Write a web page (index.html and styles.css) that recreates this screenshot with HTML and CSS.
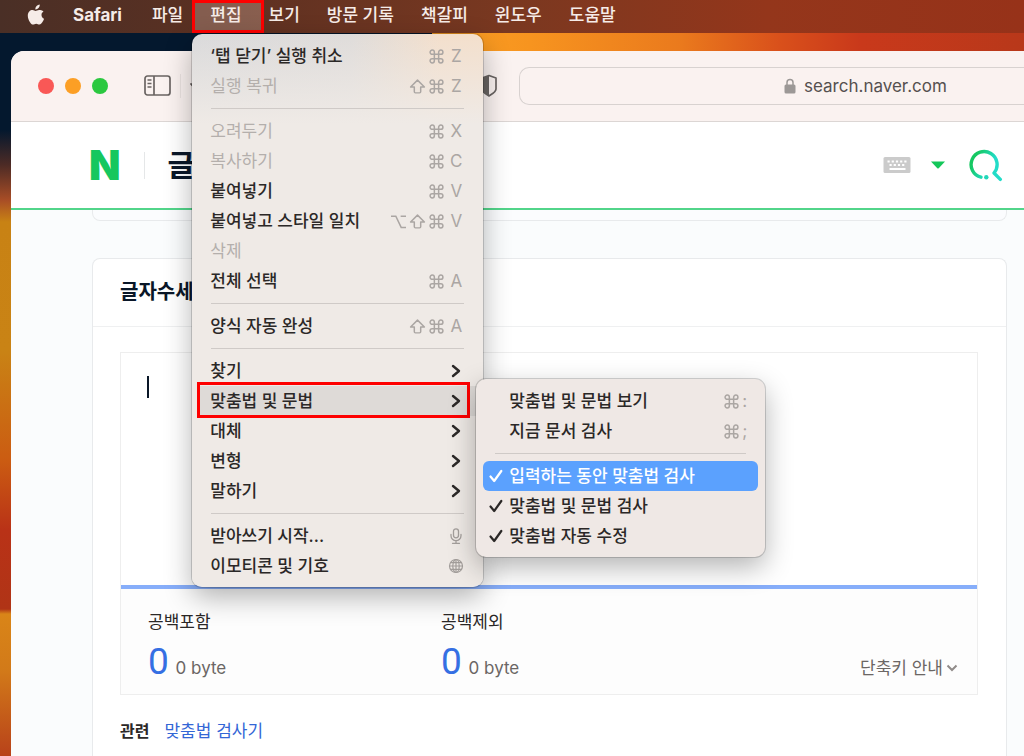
FILE: index.html
```html
<!DOCTYPE html>
<html lang="ko">
<head>
<meta charset="utf-8">
<title>글자수세기</title>
<link rel="stylesheet" href="styles.css">
</head>
<body class="desktop">
<svg class="defs" aria-hidden="true">
  <symbol id="chevron" viewBox="0 0 10 14"><path d="M2 2l6 5-6 5" fill="none" stroke="currentColor" stroke-width="2.4" stroke-linecap="round" stroke-linejoin="round"/></symbol>
  <symbol id="check" viewBox="0 0 14 14"><path d="M1.500 7.500l3.700 4.500L12.300 2" fill="none" stroke="currentColor" stroke-width="2.200" stroke-linecap="round" stroke-linejoin="round"/></symbol>
  <symbol id="cmd" viewBox="0 0 14 14"><path d="M5 5h4v4H5zM5 5H3a2 2 0 1 1 2-2zM9 5V3a2 2 0 1 1 2 2zM9 9h2a2 2 0 1 1-2 2zM5 9v2a2 2 0 1 1-2-2z" fill="none" stroke="currentColor" stroke-width="1.400"/></symbol>
  <symbol id="shift" viewBox="0 0 16 14"><path d="M8 1L1.500 7.500H5V12q0 1 1 1h4q1 0 1-1V7.500h3.500z" fill="none" stroke="currentColor" stroke-width="1.400" stroke-linejoin="round"/></symbol>
  <symbol id="option" viewBox="0 0 14 14"><path d="M0 2h4.500l5 10.500H14M9 2h5" fill="none" stroke="currentColor" stroke-width="1.400"/></symbol>
</svg>

<header class="menubar">
  <button class="apple" aria-label="Apple">
    <svg width="20" height="22" viewBox="0 0 20 22"><path fill="currentColor" d="M13.700 0.500c.2 1.400-.4 2.700-1.200 3.600-.8.900-2 1.500-3.100 1.400-.2-1.300.4-2.600 1.200-3.400.8-.9 2.100-1.500 3.100-1.600zM17.500 7.600c-1.300.8-2 1.900-2 3.400 0 1.800 1 3.100 2.600 3.800-.4 1.200-1 2.400-1.800 3.500-.8 1.100-1.600 2.300-2.900 2.300s-1.700-.8-3.200-.8-2 .8-3.200.8-2.100-1.100-3-2.400C2.700 16.300 1.800 13.900 1.800 11.700c0-3.700 2.400-5.600 4.700-5.600 1.300 0 2.300.8 3.100.8.800 0 2-.9 3.500-.9 1.300 0 3.300.4 4.400 1.600z"/></svg>
  </button>
  <button class="bar-item app-name">Safari</button>
  <button class="bar-item">파일</button>
  <div class="open-item">
    <button class="bar-item" aria-haspopup="menu" aria-expanded="true">편집</button>
    <ul class="menu edit-menu" role="menu">
      <li><button class="row" role="menuitem">‘탭 닫기’ 실행 취소<span class="keys"><svg class="key"><use href="#cmd"/></svg><kbd>Z</kbd></span></button></li>
      <li><button class="row" role="menuitem" disabled>실행 복귀<span class="keys"><svg class="key"><use href="#shift"/></svg><svg class="key"><use href="#cmd"/></svg><kbd>Z</kbd></span></button></li>
      <li class="rule" role="separator"></li>
      <li><button class="row" role="menuitem" disabled>오려두기<span class="keys"><svg class="key"><use href="#cmd"/></svg><kbd>X</kbd></span></button></li>
      <li><button class="row" role="menuitem" disabled>복사하기<span class="keys"><svg class="key"><use href="#cmd"/></svg><kbd>C</kbd></span></button></li>
      <li><button class="row" role="menuitem">붙여넣기<span class="keys"><svg class="key"><use href="#cmd"/></svg><kbd>V</kbd></span></button></li>
      <li><button class="row" role="menuitem">붙여넣고 스타일 일치<span class="keys"><svg class="key"><use href="#option"/></svg><svg class="key"><use href="#shift"/></svg><svg class="key"><use href="#cmd"/></svg><kbd>V</kbd></span></button></li>
      <li><button class="row" role="menuitem" disabled>삭제</button></li>
      <li><button class="row" role="menuitem">전체 선택<span class="keys"><svg class="key"><use href="#cmd"/></svg><kbd>A</kbd></span></button></li>
      <li class="rule" role="separator"></li>
      <li><button class="row" role="menuitem">양식 자동 완성<span class="keys"><svg class="key"><use href="#shift"/></svg><svg class="key"><use href="#cmd"/></svg><kbd>A</kbd></span></button></li>
      <li class="rule" role="separator"></li>
      <li><button class="row" role="menuitem">찾기<svg class="arrow"><use href="#chevron"/></svg></button></li>
      <li class="current">
        <button class="row" role="menuitem" aria-haspopup="menu" aria-expanded="true">맞춤법 및 문법<svg class="arrow"><use href="#chevron"/></svg></button>
        <ul class="menu sub-menu" role="menu">
          <li><button class="row" role="menuitem">맞춤법 및 문법 보기<span class="keys"><svg class="key"><use href="#cmd"/></svg><kbd class="narrow">:</kbd></span></button></li>
          <li><button class="row" role="menuitem">지금 문서 검사<span class="keys"><svg class="key"><use href="#cmd"/></svg><kbd class="narrow">;</kbd></span></button></li>
          <li class="rule" role="separator"></li>
          <li><button class="row selected" role="menuitemcheckbox" aria-checked="true"><svg class="tick"><use href="#check"/></svg>입력하는 동안 맞춤법 검사</button></li>
          <li><button class="row" role="menuitemcheckbox" aria-checked="true"><svg class="tick"><use href="#check"/></svg>맞춤법 및 문법 검사</button></li>
          <li><button class="row" role="menuitemcheckbox" aria-checked="true"><svg class="tick"><use href="#check"/></svg>맞춤법 자동 수정</button></li>
        </ul>
      </li>
      <li><button class="row" role="menuitem">대체<svg class="arrow"><use href="#chevron"/></svg></button></li>
      <li><button class="row" role="menuitem">변형<svg class="arrow"><use href="#chevron"/></svg></button></li>
      <li><button class="row" role="menuitem">말하기<svg class="arrow"><use href="#chevron"/></svg></button></li>
      <li class="rule" role="separator"></li>
      <li><button class="row" role="menuitem">받아쓰기 시작...<svg class="glyph" viewBox="0 0 16 16"><g fill="none" stroke="currentColor" stroke-width="1.300" stroke-linecap="round"><rect x="5.500" y="0.800" width="5" height="9" rx="2.500"/><path d="M3 6.500v1.200a5 5 0 0 0 10 0V6.500M8 12.700v2.500M4.500 15.300h7"/></g></svg></button></li>
      <li><button class="row" role="menuitem">이모티콘 및 기호<svg class="glyph" viewBox="0 0 16 16"><g fill="none" stroke="currentColor" stroke-width="1.200"><circle cx="8" cy="8" r="6.500"/><ellipse cx="8" cy="8" rx="3.200" ry="6.500"/><path d="M8 1.500v13M1.500 8h13M2.500 4.700h11M2.500 11.300h11"/></g></svg></button></li>
    </ul>
  </div>
  <button class="bar-item">보기</button>
  <button class="bar-item">방문 기록</button>
  <button class="bar-item">책갈피</button>
  <button class="bar-item">윈도우</button>
  <button class="bar-item">도움말</button>
</header>

<main class="window">
  <div class="toolbar">
    <div class="lights"><button class="light close" aria-label="닫기"></button><button class="light minimize" aria-label="최소화"></button><button class="light expand" aria-label="확대"></button></div>
    <div class="tools">
      <button class="tool" aria-label="사이드바"><svg width="28" height="22" viewBox="0 0 28 22"><g fill="none" stroke="currentColor" stroke-width="1.700"><rect x="1" y="1" width="25" height="19" rx="2.500"/><path d="M10 1v19"/><path d="M3.500 5h4M3.500 8.500h4M3.500 12h4" stroke-width="1.300"/></g></svg></button>
      <span class="tool-rule"></span>
      <button class="tool" aria-label="탭 그룹"><svg width="12" height="8" viewBox="0 0 12 8"><path d="M2 2l4 4 4-4" fill="none" stroke="currentColor" stroke-width="1.800" stroke-linecap="round"/></svg></button>
    </div>
    <button class="tool shield" aria-label="개인 정보 보호"><svg width="18" height="24" viewBox="0 0 18 24"><path d="M9 1.500l7 2.500v11c0 3-4 5-7 7-3-2-7-4-7-7V4z" fill="none" stroke="currentColor" stroke-width="1.700" stroke-linejoin="round"/><path d="M9 1.500V22c-3-2-7-4-7-7V4z" fill="currentColor"/></svg></button>
    <label class="address">
      <svg width="12" height="16" viewBox="0 0 12 16"><path d="M3 7V4.500a3 3 0 0 1 6 0V7" fill="none" stroke="#9c9896" stroke-width="1.500"/><rect x="0.500" y="6.500" width="11" height="9" rx="1.500" fill="#9c9896"/></svg>
      <input type="text" value="search.naver.com" aria-label="주소">
    </label>
  </div>

  <div class="search-head">
    <a class="logo" href="#" aria-label="네이버">N</a>
    <span class="logo-rule"></span>
    <span class="query">글</span>
    <button class="tool keyboard" aria-label="키보드"><svg width="28" height="18" viewBox="0 0 28 18"><rect x="0.500" y="1" width="27" height="16" rx="1.500" fill="#cbcbcb"/><path d="M4.500 5.500H25M6.500 9h16" stroke="#fff" stroke-width="2.200" stroke-dasharray="2.200 2"/><path d="M6.500 13h16" stroke="#fff" stroke-width="2"/></svg></button>
    <button class="tool" aria-label="자동완성"><svg width="14" height="8" viewBox="0 0 14 8"><path d="M0 0.500h14L7.700 7.300q-.7.600-1.400 0z" fill="#14c75a"/></svg></button>
    <button class="tool find" aria-label="검색"><svg width="34" height="34" viewBox="0 0 34 34"><defs><linearGradient id="sweep" gradientUnits="userSpaceOnUse" x1="4" y1="4" x2="24" y2="14"><stop offset="0.200" stop-color="#16c862"/><stop offset="1" stop-color="#22dcc8"/></linearGradient></defs><path d="M12 29.200A13 13 0 1 1 25 25L31.300 31.400" fill="none" stroke="url(#sweep)" stroke-width="3.400" stroke-linecap="round" stroke-linejoin="round"/><circle cx="17.300" cy="29.200" r="2.200" fill="#22d8ba"/></svg></button>
  </div>

  <div class="content">
    <div class="card previous"></div>
    <section class="card counter">
      <h2 class="card-title">글자수세기</h2>
      <div class="card-body">
        <div class="panel">
          <div class="editor"><textarea class="entry" aria-label="글자수를 셀 내용"></textarea></div>
          <div class="totals">
            <div class="total"><span class="total-name">공백포함</span><span class="amount"><strong>0</strong> 0 byte</span></div>
            <div class="total"><span class="total-name">공백제외</span><span class="amount"><strong>0</strong> 0 byte</span></div>
            <button class="help">단축키 안내<svg width="12" height="8" viewBox="0 0 12 8"><path d="M1.500 1.500L6 6l4.500-4.500" fill="none" stroke="#908b89" stroke-width="2"/></svg></button>
          </div>
        </div>
        <p class="related"><b>관련</b><a href="#">맞춤법 검사기</a></p>
      </div>
    </section>
  </div>
</main>
</body>
</html>
```
FILE: styles.css
```css
* { box-sizing: border-box; }

button, input, textarea {
  margin: 0;
  padding: 0;
  border: 0;
  background: none;
  color: inherit;
  font: inherit;
}

.defs { position: absolute; width: 0; height: 0; }

.desktop {
  display: flex;
  flex-direction: column;
  height: 100vh;
  margin: 0;
  overflow: hidden;
  font: 17px/24px Inter, "Noto Sans CJK KR", sans-serif;
  color: #2b2827;
  background:
    linear-gradient(90deg, #04182e 432px, #fba024 432px, #f7941f 530px, #ea7a1d 680px, #d9501b 780px, #c9391b 860px, #b8381a) 0 0 / 100% 80px no-repeat,
    linear-gradient(#04182e 130px, #4d2b25 165px, #a84d26 200px, #c88214 222px, #c98315 350px, #cb5c12 460px, #b93217 530px, #b03416 609px, #d98518 614px, #d27a19 670px, #b8421a);
}

/* Menu bar */
.menubar {
  position: relative;
  z-index: 1;
  display: flex;
  flex: none;
  align-items: stretch;
  height: 33px;
  padding-left: 26px;
  color: #f6ece8;
  background: linear-gradient(90deg, #4a2f26, #5a3022 20%, #7a3820 50%, #94361b 75%, #973219);
}

.apple { display: flex; align-items: flex-start; width: 34px; padding-top: 4px; }
.bar-item { padding: 0 14px 3px 13px; font-weight: 500; white-space: nowrap; }
.app-name { padding-right: 17px; font-weight: 700; }

.open-item { position: relative; display: flex; }
.open-item::before {
  content: "";
  position: absolute;
  inset: 0 -8px 0 -5px;
  border: 3px solid #fe0000;
  background: rgba(255, 225, 210, .26);
}
.open-item > .bar-item { position: relative; }

/* Drop-down menus */
.menu {
  position: absolute;
  margin: 0;
  padding: 7px 0 6px;
  list-style: none;
  color: #2b2827;
  background: #efeae6;
  border-radius: 10px;
  box-shadow: 0 0 0 1px rgba(0, 0, 0, .16), 0 10px 28px rgba(0, 0, 0, .3);
}

.edit-menu {
  top: 34px;
  left: -5px;
  width: 291px;
  background:
    linear-gradient(rgba(239, 234, 230, 0), #efeae6 90px),
    linear-gradient(90deg, #dadadb, #dfdcda 55%, #f3dfcc 85%);
}

.row {
  display: flex;
  align-items: center;
  width: 100%;
  height: 30px;
  padding: 0 18px;
  text-align: left;
  font-weight: 500;
  white-space: nowrap;
}
.row:disabled { color: #b4afac; font-weight: 400; }

.rule { height: 15px; padding: 7px 19px 0; }
.rule::before { content: ""; display: block; height: 1px; background: #cfcac7; }

.keys { display: flex; align-items: center; gap: 2px; margin-left: auto; color: #aba6a3; font-weight: 400; }
.key { width: 17px; height: 15px; }
kbd { width: 18px; font: inherit; text-align: center; }
.narrow { width: 5px; }
.arrow { width: 10px; height: 14px; margin: 0 4px 0 auto; }
.glyph { width: 16px; height: 16px; margin: 0 1px 0 auto; color: #a39e9b; }

.current { position: relative; }
.current > .row { background: linear-gradient(#dedad7, #dedad7) 5px 0 / calc(100% - 11px) 100% no-repeat; }
.current::after {
  content: "";
  position: absolute;
  inset: -4px 13px -2px 5px;
  border: 3px solid #fe0000;
}

.sub-menu { top: -7px; left: 284px; width: 289px; background: #efe8e5; z-index: 1; }
.sub-menu li { padding: 0 7px; }
.sub-menu .row { position: relative; padding: 0 11px 0 26px; }
.sub-menu .rule { padding: 7px 19px 0; }
.sub-menu .selected { color: #fff; background: #5ba1fe; border-radius: 6px; }
.tick { position: absolute; left: 6px; width: 14px; height: 14px; }

/* Browser window */
.window {
  display: flex;
  flex: 1;
  flex-direction: column;
  margin: 18px 0 0 11px;
  overflow: hidden;
  background: #fafcfd;
  border-radius: 13px 0 0 0;
}

.toolbar {
  display: flex;
  flex: none;
  align-items: center;
  height: 71px;
  padding-left: 27px;
  color: #696462;
  background: #faf2f0;
  border-bottom: 1px solid #dcd6d4;
}
.lights { display: flex; gap: 11px; }
.light { width: 16px; height: 16px; border-radius: 50%; }
.close { background: #f95856; }
.minimize { background: #fc9f25; }
.expand { background: #2bc840; }

.tools { display: flex; align-items: center; gap: 8px; margin-left: 36px; }
.tool { display: flex; }
.tool-rule { width: 1px; height: 24px; background: #e9e2e0; }
.shield { margin: 0 21px 0 auto; }
.address {
  display: flex;
  flex: 0 1 505px;
  align-items: center;
  gap: 8px;
  min-width: 0;
  height: 38px;
  padding-left: 264px;
  border: 1px solid #d8d2d0;
  border-right: 0;
  border-radius: 10px 0 0 10px;
}
.address input { flex: 1; width: 0; color: #55504f; }

.search-head {
  display: flex;
  flex: none;
  align-items: center;
  height: 88px;
  padding: 0 21px 0 78px;
  background: #fff;
  border-bottom: 2px solid #52d58a;
}
.logo { color: #16c75e; font-size: 41px; font-weight: 900; line-height: 41px; text-decoration: none; }
.logo-rule { width: 1px; height: 27px; margin: 0 23px; background: #e5e7e8; }
.query { color: #0a1728; font-size: 30px; font-weight: 700; line-height: 40px; }
.keyboard { margin: 0 20px 0 auto; }
.find { margin-left: 24px; }

.content {
  display: flex;
  flex: 1;
  flex-direction: column;
  gap: 37px;
  padding: 0 17px 0 81px;
}
.card { background: #fff; border: 1px solid #e8eaec; }
.previous { flex: none; height: 11px; background: #fbfcfe; border-top: 0; border-radius: 0 0 8px 8px; }
.counter { flex: 1; border-bottom: 0; border-radius: 8px 8px 0 0; }
.card-title {
  margin: 0;
  padding: 18px 27px 19px;
  color: #0a1728;
  border-bottom: 1px solid #eff0f1;
  font-size: 20px;
  line-height: 30px;
}
.card-body { padding: 25px 28px 0 27px; }
.panel { border: 1px solid #eeeeee; }
.editor { position: relative; display: flex; height: 236px; border-bottom: 4px solid #87aefa; }
.entry { flex: 1; padding: 22px 27px; outline: 0; resize: none; }
.editor::before { content: ""; position: absolute; top: 23px; left: 26px; width: 2px; height: 22px; background: #0a1728; }

.totals { display: flex; padding: 21px 19px 7px 27px; background: #fdfdfd; }
.total { display: flex; flex-direction: column; gap: 9px; width: 293px; }
.amount { color: #6b6664; line-height: 38px; }
.amount strong { margin-right: 2px; color: #356fe3; font: 400 37px/38px Roboto, sans-serif; }
.help { display: flex; align-items: center; align-self: flex-end; gap: 3px; height: 30px; margin: 0 0 4px auto; color: #6b6664; }

.related { display: flex; gap: 15px; margin: 24px 0 0; }
.related b { font-size: 16px; }
.related a { color: #3366d6; text-decoration: none; }
```
